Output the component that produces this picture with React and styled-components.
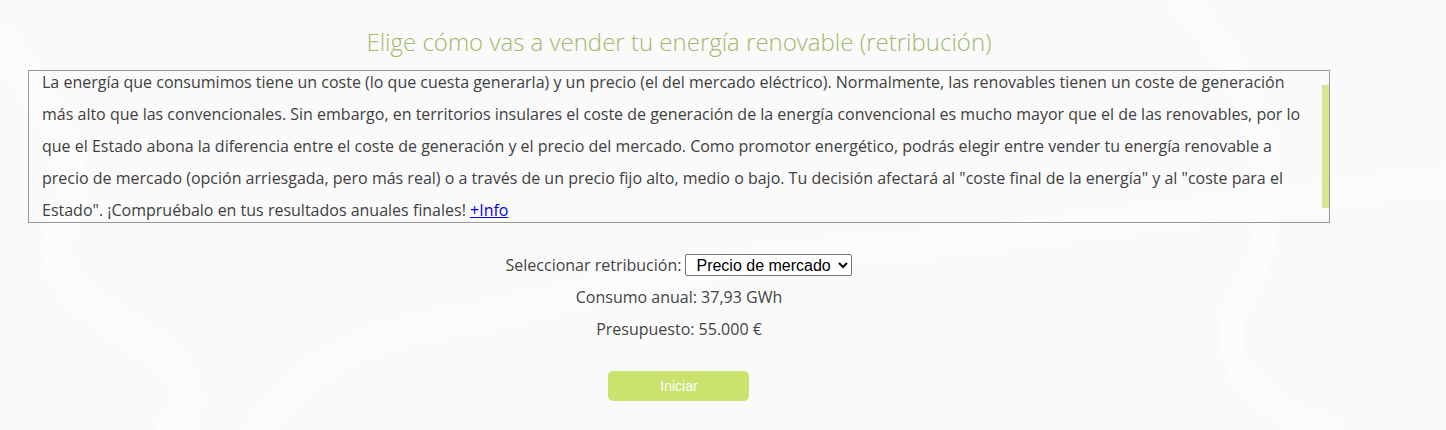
import React, { useState } from "react";
import styled, { createGlobalStyle } from "styled-components";

const GlobalStyle = createGlobalStyle`
  html, body {
    margin: 0;
    padding: 0;
    background: #fafafa;
    font-family: "Open Sans", sans-serif;
  }
`;

const Page = styled.div`
  position: relative;
  min-height: 430px;
  overflow: hidden;
`;

const Swirls = styled.svg`
  position: absolute;
  inset: 0;
  width: 100%;
  height: 100%;
  pointer-events: none;
  opacity: 0.5;
`;

const Container = styled.div`
  position: relative;
  width: 1302px;
  margin-left: 28px;
  padding-top: 24px;
  display: flex;
  flex-direction: column;
  align-items: center;
`;

const Title = styled.h2`
  margin: 0 0 10px;
  font-weight: 300;
  font-size: 24px;
  line-height: 36px;
  color: #a3b86b;
  text-align: center;
`;

const InfoBox = styled.div`
  position: relative;
  box-sizing: border-box;
  width: 100%;
  height: 153px;
  border: 1px solid #999;
  overflow: hidden;
  padding: 0 14px 0 13px;
`;

// drawn thumb: headless browser hides native scrollbars
const ScrollThumb = styled.div`
  position: absolute;
  top: 14px;
  right: 0;
  width: 7px;
  height: 123px;
  background: #d4e88e;
`;

const InfoText = styled.p`
  margin: -5px 0 0;
  font-size: 16px;
  line-height: 32px;
  color: #404040;

  a {
    color: #0000ee;
  }
`;

const Controls = styled.div`
  margin-top: 26px;
  display: flex;
  flex-direction: column;
  align-items: center;
`;

const Line = styled.div`
  font-size: 16px;
  line-height: 32px;
  color: #444;
  display: flex;
  align-items: center;
  gap: 4px;
`;

const Select = styled.select`
  font-family: "Liberation Sans", Arial, sans-serif;
  font-size: 16px;
  color: #000;
  height: 22px;
  padding: 0 4px 0 6px;
  border: 1px solid #767676;
  border-radius: 2px;
  background: #fff;
`;

const StartButton = styled.button`
  margin-top: 26px;
  width: 141px;
  height: 30px;
  border: none;
  border-radius: 5px;
  background: #c9e36e;
  color: #fff;
  font-family: "Liberation Sans", Arial, sans-serif;
  font-size: 14px;
  cursor: pointer;
`;

const options = ["Precio de mercado", "Precio fijo alto", "Precio fijo medio", "Precio fijo bajo"];

export default function App() {
  const [choice, setChoice] = useState(options[0]);

  return (
    <Page>
      <GlobalStyle />
      <Swirls viewBox="0 0 1446 430" preserveAspectRatio="none">
        <path
          d="M0 40 C60 120 90 180 60 230 C40 290 120 320 170 360 C200 400 180 430 170 430"
          fill="none"
          stroke="#ffffff"
          strokeWidth="30"
          strokeLinecap="round"
        />
        <path
          d="M260 430 C300 360 380 330 470 320 C560 300 700 260 860 250 C1000 240 1200 210 1446 180"
          fill="none"
          stroke="#ffffff"
          strokeWidth="26"
          strokeLinecap="round"
        />
        <path
          d="M1180 0 C1260 80 1300 200 1240 300 C1210 360 1260 410 1330 430"
          fill="none"
          stroke="#ffffff"
          strokeWidth="24"
          strokeLinecap="round"
        />
      </Swirls>
      <Container>
        <Title>Elige cómo vas a vender tu energía renovable (retribución)</Title>
        <InfoBox>
          <InfoText>
            La energía que consumimos tiene un coste (lo que cuesta generarla) y un precio (el del
            mercado eléctrico). Normalmente, las renovables tienen un coste de generación más alto que
            las convencionales. Sin embargo, en territorios insulares el coste de generación de la
            energía convencional es mucho mayor que el de las renovables, por lo que el Estado abona la
            diferencia entre el coste de generación y el precio del mercado. Como promotor energético,
            podrás elegir entre vender tu energía renovable a precio de mercado (opción arriesgada, pero
            más real) o a través de un precio fijo alto, medio o bajo. Tu decisión afectará al "coste
            final de la energía" y al "coste para el Estado". ¡Compruébalo en tus resultados anuales
            finales! <a href="#info">+Info</a>
          </InfoText>
          <ScrollThumb />
        </InfoBox>
        <Controls>
          <Line>
            Seleccionar retribución:
            <Select value={choice} onChange={(e) => setChoice(e.target.value)}>
              {options.map((o) => (
                <option key={o}>{o}</option>
              ))}
            </Select>
          </Line>
          <Line>Consumo anual: 37,93 GWh</Line>
          <Line>Presupuesto: 55.000 €</Line>
          <StartButton>Iniciar</StartButton>
        </Controls>
      </Container>
    </Page>
  );
}
